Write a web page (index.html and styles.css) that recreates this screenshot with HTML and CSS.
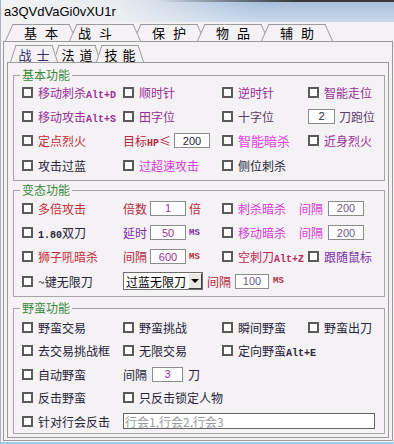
FILE: index.html
```html
<!DOCTYPE html>
<html lang="zh">
<head>
    <meta charset="UTF-8">
    <meta name="viewport" content="width=device-width, initial-scale=1.0">
    <title>a3QVdVaGi0vXU1r</title>
    <link rel="stylesheet" href="styles.css">
</head>
<body>
    <div class="win">
        <div class="titlebar">a3QVdVaGi0vXU1r</div>
        <div class="tabs main-tabs">
            <div class="tab">基 本</div>
            <div class="tab on">战 斗</div>
            <div class="tab">保 护</div>
            <div class="tab">物 品</div>
            <div class="tab">辅 助</div>
        </div>
        <div class="panel outer">
            <div class="tabs sub-tabs">
                <div class="tab on">战 士</div>
                <div class="tab">法 道</div>
                <div class="tab">技 能</div>
            </div>
            <div class="panel inner">

                <div class="group g1">
                    <div class="gtitle">基本功能</div>
                    <div class="rows">
                        <div class="it c-pu"><span class="cb"></span><span>移动刺杀<span class="key">Alt+D</span></span></div>
                        <div class="it c-pu"><span class="cb"></span>顺时针</div>
                        <div class="it c-pu"><span class="cb"></span>逆时针</div>
                        <div class="it c-pu"><span class="cb"></span>智能走位</div>

                        <div class="it c-pu"><span class="cb"></span><span>移动攻击<span class="key">Alt+S</span></span></div>
                        <div class="it c-pu"><span class="cb"></span>田字位</div>
                        <div class="it c-pd"><span class="cb"></span>十字位</div>
                        <div class="it c-pd tight4"><input class="box w27 c-dk" value="2">刀跑位</div>

                        <div class="it c-re"><span class="cb"></span>定点烈火</div>
                        <div class="it c-rd tight3"><span>目标<span class="key">HP</span>≤</span><input class="box w36 c-dk" value="200"></div>
                        <div class="it c-mg big"><span class="cb"></span>智能暗杀</div>
                        <div class="it c-pu"><span class="cb"></span>近身烈火</div>

                        <div class="it c-dk"><span class="cb"></span>攻击过蓝</div>
                        <div class="it c-mg"><span class="cb"></span>过超速攻击</div>
                        <div class="it c-dk"><span class="cb"></span>侧位刺杀</div>
                    </div>
                </div>

                <div class="group g2">
                    <div class="gtitle">变态功能</div>
                    <div class="rows">
                        <div class="it c-re"><span class="cb"></span>多倍攻击</div>
                        <div class="it c-rd tight3">倍数<input class="box w36 c-pu" value="1">倍</div>
                        <div class="it c-mg span2"><span class="cb"></span>刺杀暗杀<span class="gapl">间隔</span><input class="box w36 c-gr" value="200"></div>

                        <div class="it c-dk"><span class="cb"></span><span><span class="key">1.80</span>双刀</span></div>
                        <div class="it c-vi tight3">延时<input class="box w36 c-pu" value="50"><span class="ms">MS</span></div>
                        <div class="it c-mg span2"><span class="cb"></span>移动暗杀<span class="gapl">间隔</span><input class="box w36 c-gr" value="200"></div>

                        <div class="it c-re"><span class="cb"></span>狮子吼暗杀</div>
                        <div class="it c-rd tight3">间隔<input class="box w36 c-pu" value="600"><span class="ms">MS</span></div>
                        <div class="it c-rm"><span class="cb"></span><span>空刺刀<span class="key">Alt+Z</span></span></div>
                        <div class="it c-vi"><span class="cb"></span>跟随鼠标</div>

                        <div class="it c-dk"><span class="cb"></span>~键无限刀</div>
                        <div class="it c-rd span3 tight4">
                            <div class="sel"><span>过蓝无限刀</span><span class="arrow"></span></div>
                            间隔<input class="box w34 c-gr" value="100"><span class="ms">MS</span>
                        </div>
                    </div>
                </div>

                <div class="group g3">
                    <div class="gtitle">野蛮功能</div>
                    <div class="rows">
                        <div class="it c-dk"><span class="cb"></span>野蛮交易</div>
                        <div class="it c-dk"><span class="cb"></span>野蛮挑战</div>
                        <div class="it c-dk"><span class="cb"></span>瞬间野蛮</div>
                        <div class="it c-dk"><span class="cb"></span>野蛮出刀</div>

                        <div class="it c-dk"><span class="cb"></span>去交易挑战框</div>
                        <div class="it c-dk"><span class="cb"></span>无限交易</div>
                        <div class="it c-dk span2"><span class="cb"></span><span>定向野蛮<span class="key">Alt+E</span></span></div>

                        <div class="it c-dk"><span class="cb"></span>自动野蛮</div>
                        <div class="it c-dk span3">间隔<input class="box w31 c-pu" value="3">刀</div>

                        <div class="it c-dk"><span class="cb"></span>反击野蛮</div>
                        <div class="it c-dk span3"><span class="cb"></span>只反击锁定人物</div>

                        <div class="it c-dk"><span class="cb"></span>针对行会反击</div>
                        <div class="it span3"><input class="field" value="行会1,行会2,行会3"></div>
                    </div>
                </div>

            </div>
        </div>
    </div>
</body>
</html>
```

FILE: styles.css
```css
*{
    margin: 0px;
    padding: 0px;
    box-sizing: border-box;
    outline: none;
}
body{
    font-family: "Noto Sans CJK SC", sans-serif;
    font-size: 12px;
    background: #fff;
}
.win{
    width: 394px;
    height: 444px;
    display: flex;
    flex-direction: column;
    background: #f5f2f5;
    border-left: 1px solid #a9b3c2;
    border-bottom: 2px solid #9ccaea;
    padding-bottom: 1px;
    overflow: hidden;
}
.titlebar{
    flex: none;
    height: 22px;
    padding: 1px 0 0 3px;
    font: 13px/21px "Liberation Sans", sans-serif;
    color: #000;
    background:
        linear-gradient(to right, rgba(50,50,50,0) 40%, #3a3a3a 75%) top / 100% 2px no-repeat,
        linear-gradient(to right, #f3f3f3 0%, rgba(243,243,243,0.85) 30%, rgba(243,243,243,0) 65%),
        linear-gradient(#a4bddb, #cad9eb);
}

/* tabs */
.tabs{
    display: flex;
    flex: none;
    height: 17px;
}
.main-tabs{
    margin-top: 2px;
    padding-left: 4px;
}
.sub-tabs{
    margin: 3px 0 0 6px;
}
.tab{
    position: relative;
    z-index: 1;
    display: flex;
    align-items: center;
    justify-content: center;
    height: 17px;
    font-size: 13px;
    color: #000;
    white-space: pre;
}
.tab::before,
.tab::after{
    content: "";
    position: absolute;
    top: 0;
    bottom: 0;
    width: 50%;
    background: #f5f2f5;
    border-top: 1px solid #9a9a9a;
    z-index: -1;
}
.tab::before{
    left: 0;
    border-left: 1px solid #9a9a9a;
    transform-origin: left bottom;
    transform: skewX(-24deg);
}
.tab::after{
    right: 0;
    border-right: 1px solid #9a9a9a;
    transform-origin: right bottom;
    transform: skewX(24deg);
}
.tab.on{
    z-index: 5;
}
.main-tabs .tab{
    width: 72px;
    margin-right: -8px;
    word-spacing: 5px;
}
.main-tabs .tab.on{
    padding-right: 20px;
}
.sub-tabs .tab{
    width: 48px;
    margin-right: -5px;
    padding-top: 2px;
    word-spacing: 2px;
}
.sub-tabs .tab::before{
    transform: skewX(-18deg);
}
.sub-tabs .tab::after{
    transform: skewX(18deg);
}
.sub-tabs .tab.on{
    color: #33306e;
}

/* panels */
.panel{
    border: 1px solid #9a9a9a;
    background: #f5f2f5;
}
.outer{
    flex: 1;
    margin: 0 1px 0 2px;
    display: flex;
    flex-direction: column;
}
.inner{
    flex: 1;
    margin: 0 3px 2px 3px;
    padding: 0 3px 0 5px;
}

/* group boxes */
.group{
    border: 1px solid #a6a6a6;
    padding: 0 0 3px 8px;
}
.g1{ margin-top: 12px; }
.g2{ margin-top: 9px; }
.g3{ margin-top: 11px; padding-bottom: 0; }
.gtitle{
    width: fit-content;
    margin: -9px 0 0 -2px;
    padding: 0 2px;
    line-height: 16px;
    background: #f5f2f5;
    color: #3a8a3a;
}
.rows{
    display: grid;
    grid-template-columns: 101px 99px 86px 1fr;
    grid-auto-rows: 24.3px;
    margin-top: -3px;
}
.g2 .rows{ margin-top: -2px; }
.g3 .rows{
    grid-auto-rows: 23.5px;
    margin-top: -1px;
}
.it{
    display: flex;
    align-items: center;
    gap: 5px;
    white-space: nowrap;
}
.tight3{ gap: 3px; }
.tight4{ gap: 4px; }
.span2{ grid-column: span 2; }
.span3{ grid-column: span 3; }
.gapl{ margin-left: 8px; }
.big{ font-size: 13px; }

.cb{
    flex: none;
    width: 11px;
    height: 11px;
    border: 2px solid #5a5a5a;
    background: #fff;
}
.key{
    font: bold 10px "Liberation Mono", monospace;
}
.ms{
    font: bold 9px "Liberation Mono", monospace;
}
.box{
    height: 15px;
    border: 1px solid #8c8c8c;
    background: #fff;
    font: 11px "Liberation Sans", sans-serif;
    text-align: center;
    padding: 0;
}
.w27{ width: 27px; }
.w31{ width: 31px; }
.w34{ width: 34px; }
.w36{ width: 36px; }
.sel{
    display: flex;
    align-items: center;
    width: 80px;
    height: 18px;
    border: 1px solid #6e6e6e;
    background: #fff;
    color: #000;
}
.sel span:first-child{
    flex: 1;
    padding-left: 2px;
    font-size: 12px;
}
.arrow{
    width: 14px;
    height: 16px;
    display: flex;
    align-items: center;
    justify-content: center;
    background: #ebe8e4;
    border: 1px solid;
    border-color: #fff #404040 #404040 #fff;
}
.arrow::after{
    content: "";
    border-left: 4px solid transparent;
    border-right: 4px solid transparent;
    border-top: 4px solid #000;
}
.field{
    width: 252px;
    height: 16px;
    border: 1px solid #646464;
    background: #fff;
    color: #9a9a9a;
    font: 12px "Noto Sans CJK SC", sans-serif;
    padding-left: 1px;
}

/* text colours */
.c-pu{ color: #9a2f98; }
.c-pd{ color: #5a3d6e; }
.c-re{ color: #c42c34; }
.c-rd{ color: #b52a40; }
.c-rm{ color: #c02858; }
.c-mg{ color: #d83ad8; }
.big.c-mg{ color: #e640e6; }
.c-vi{ color: #7a30ac; }
.c-dk{ color: #26263a; }
.c-gr{ color: #6a5a86; }
```
